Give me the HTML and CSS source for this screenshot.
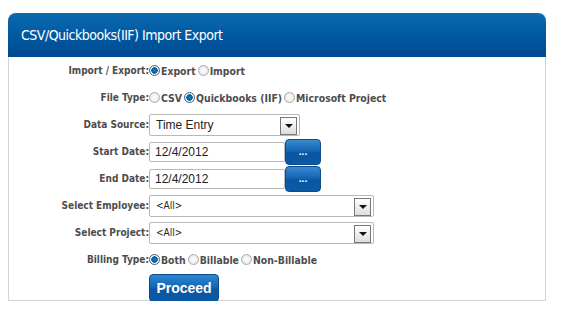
FILE: index.html
```html
<!DOCTYPE html>
<html lang="en">
<head>
    <meta charset="UTF-8">
    <title>CSV/Quickbooks(IIF) Import Export</title>
    <link rel="stylesheet" href="styles.css">
</head>
<body>
<div class="panel">
    <div class="panel-head">CSV/Quickbooks(IIF) Import Export</div>
    <div class="form">
        <div class="label">Import / Export:</div>
        <div class="field">
            <span class="radio on"></span><span class="opt">Export</span>
            <span class="radio"></span><span class="opt">Import</span>
        </div>

        <div class="label">File Type:</div>
        <div class="field">
            <span class="radio"></span><span class="opt">CSV</span>
            <span class="radio on"></span><span class="opt">Quickbooks (IIF)</span>
            <span class="radio"></span><span class="opt">Microsoft Project</span>
        </div>

        <div class="label">Data Source:</div>
        <div class="field">
            <div class="select short">Time Entry<span class="arrow"></span></div>
        </div>

        <div class="label">Start Date:</div>
        <div class="field">
            <div class="input">12/4/2012</div>
            <button class="btn-dots">...</button>
        </div>

        <div class="label">End Date:</div>
        <div class="field">
            <div class="input">12/4/2012</div>
            <button class="btn-dots">...</button>
        </div>

        <div class="label">Select Employee:</div>
        <div class="field">
            <div class="select long">&lt;All&gt;<span class="arrow"></span></div>
        </div>

        <div class="label">Select Project:</div>
        <div class="field">
            <div class="select long">&lt;All&gt;<span class="arrow"></span></div>
        </div>

        <div class="label">Billing Type:</div>
        <div class="field">
            <span class="radio on"></span><span class="opt">Both</span>
            <span class="radio"></span><span class="opt">Billable</span>
            <span class="radio"></span><span class="opt">Non-Billable</span>
        </div>

        <div></div>
        <div class="field">
            <button class="btn-proceed">Proceed</button>
        </div>
    </div>
</div>
</body>
</html>
```

FILE: styles.css
```css
body {
    margin: 0;
    padding: 13px 17px 0 8px;
    background: #fff;
    font-family: "DejaVu Sans Condensed", "DejaVu Sans", sans-serif;
}
.panel {
    width: 536px;
    border: 1px solid #d4d4d4;
    border-top: none;
    border-radius: 8px 8px 0 0;
    height: 287px;
}
.panel-head {
    height: 44px;
    margin: 0 -1px;
    padding-left: 13px;
    line-height: 44px;
    color: #fff;
    font-size: 14px;
    letter-spacing: -0.5px;
    border-radius: 8px 8px 0 0;
    background: linear-gradient(#0b6ab0, #0058a0 55%, #004a8f);
}
.form {
    display: grid;
    grid-template-columns: 140px auto;
}
.label {
    font-size: 10px;
    font-weight: bold;
    color: #4d4d4d;
    display: flex;
    align-items: center;
    justify-content: flex-end;
}
.field {
    display: flex;
    align-items: center;
    min-height: 27px;
}
.opt {
    font-size: 10.4px;
    font-weight: bold;
    color: #4d4d4d;
    margin-right: 2px;
}
.radio {
    width: 11px;
    height: 11px;
    border-radius: 50%;
    border: 1px solid #a8a8a8;
    background: radial-gradient(#fff, #e2e2e2);
    box-sizing: border-box;
    margin-right: 1px;
}
.radio.on {
    border-color: #3d5f80;
    background: radial-gradient(circle, #1479b8 0, #0a5f99 3px, #fff 3.5px, #e6eef4 5px);
}
.select, .input {
    box-sizing: border-box;
    border: 1px solid #b8b8b8;
    border-radius: 2px;
    font-family: "Liberation Sans", Arial, sans-serif;
    font-size: 12px;
    color: #222;
    display: flex;
    align-items: center;
    position: relative;
}
.select {
    height: 22px;
    padding-left: 6px;
}
.select.short {
    width: 151px;
}
.select.long {
    width: 225px;
    font-family: "DejaVu Sans Condensed", sans-serif;
    font-size: 10px;
}
.arrow {
    position: absolute;
    right: 2px;
    top: 2px;
    width: 15px;
    height: 16px;
    border: 1px solid #777;
    background: linear-gradient(#fff, #ddd);
}
.arrow::after {
    content: "";
    position: absolute;
    left: 4px;
    top: 6px;
    border-left: 4px solid transparent;
    border-right: 4px solid transparent;
    border-top: 4px solid #111;
}
.input {
    width: 136px;
    height: 20px;
    padding-left: 5px;
}
.btn-dots {
    width: 36px;
    height: 26px;
    border: 1px solid #0c4c8a;
    border-radius: 4px;
    color: #fff;
    font-size: 10px;
    font-weight: bold;
    line-height: 10px;
    padding: 0;
    background: linear-gradient(#3a8ad0, #1366b5 45%, #0a55a0 55%, #0b5aa6);
}
.btn-proceed {
    width: 70px;
    height: 28px;
    margin-top: 1px;
    border: 1px solid #0c4c8a;
    border-radius: 4px;
    color: #fff;
    font-family: "Liberation Sans", Arial, sans-serif;
    font-size: 14px;
    font-weight: bold;
    padding: 0;
    background: linear-gradient(#2f86d0, #1368b8 45%, #0a56a2 55%, #0b5aa6);
}
```
